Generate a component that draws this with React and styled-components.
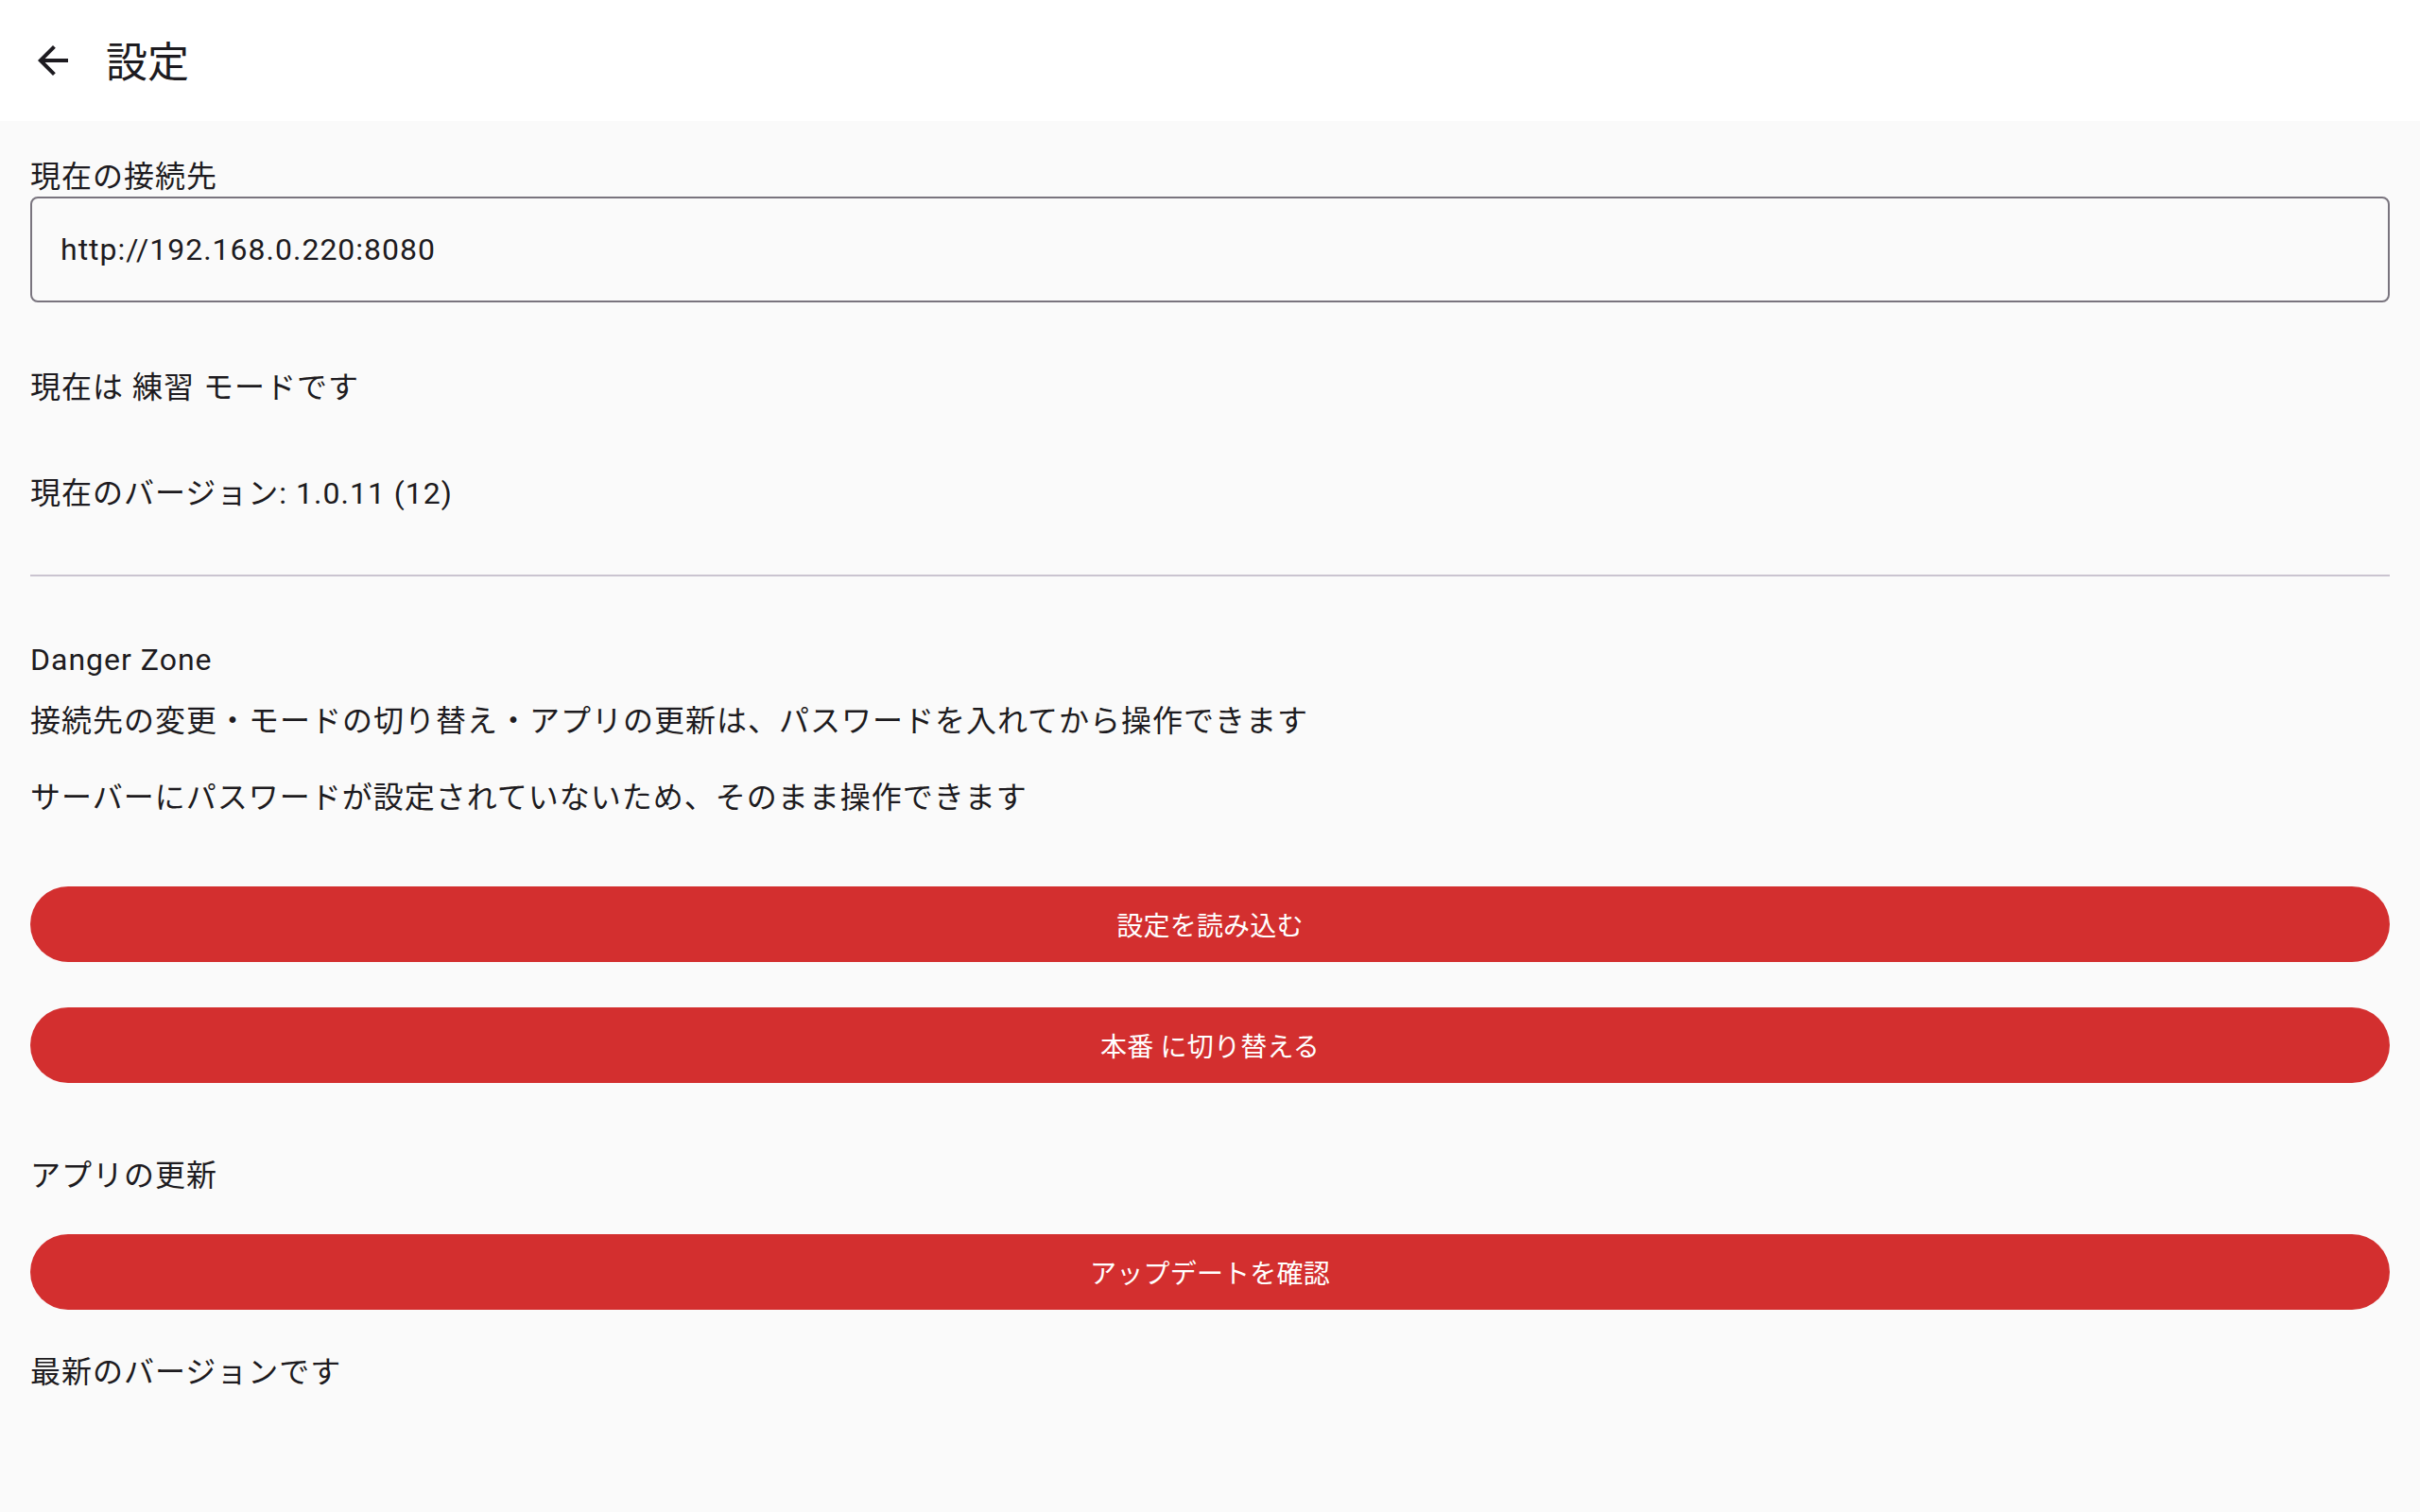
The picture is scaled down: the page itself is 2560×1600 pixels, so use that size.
import React from "react";
import styled, { createGlobalStyle } from "styled-components";

const GlobalStyle = createGlobalStyle`
  html, body {
    margin: 0;
    padding: 0;
    background: #fafafa;
  }
  body {
    font-family: Roboto, "Noto Sans CJK JP", "Noto Sans", sans-serif;
    color: #1d1b20;
    -webkit-font-smoothing: antialiased;
  }
  * { box-sizing: border-box; }
`;

const Page = styled.div`
  min-height: 100vh;
  display: flex;
  flex-direction: column;
  background: #fafafa;
`;

const AppBar = styled.header`
  height: 128px;
  background: #ffffff;
  display: flex;
  align-items: center;
  padding: 0 32px;
  gap: 32px;
`;

const IconButton = styled.button`
  width: 48px;
  height: 48px;
  padding: 0;
  border: none;
  background: transparent;
  display: flex;
  align-items: center;
  justify-content: center;
  color: #1d1b20;
  cursor: pointer;
`;

const Title = styled.h1`
  margin: 6px 0 0;
  font-size: 44px;
  line-height: 56px;
  font-weight: 400;
  color: #1d1b20;
`;

const Content = styled.main`
  display: flex;
  flex-direction: column;
  padding: 0 32px 64px;
`;

const FieldLabel = styled.label`
  margin-top: 39px;
  font-size: 32px;
  line-height: 40px;
  letter-spacing: 1px;
  color: #1d1b20;
`;

const TextField = styled.div`
  margin-top: 1px;
  height: 112px;
  border: 2px solid #79747e;
  border-radius: 8px;
  padding: 0 30px;
  display: flex;
  align-items: center;
  font-size: 32px;
  line-height: 48px;
  letter-spacing: 1px;
  color: #1d1b20;
`;

const BodyText = styled.p`
  margin: ${(p) => p.$mt}px 0 0;
  font-size: 32px;
  line-height: 48px;
  letter-spacing: 1px;
  color: #1d1b20;
`;

const Divider = styled.hr`
  margin: ${(p) => p.$mt}px 0 0;
  border: none;
  height: 2px;
  background: #cac4d0;
`;

const DangerButton = styled.button`
  margin-top: ${(p) => p.$mt}px;
  height: 80px;
  width: 100%;
  border: none;
  border-radius: 40px;
  padding: 5px 48px 0;
  background: #d32f2f;
  color: #ffffff;
  font-family: Roboto, "Noto Sans CJK JP", sans-serif;
  font-size: 28px;
  font-weight: 400;
  letter-spacing: 0.2px;
  line-height: 40px;
  display: flex;
  align-items: center;
  justify-content: center;
  cursor: pointer;
`;

const ArrowBack = () => (
  <svg width="48" height="48" viewBox="0 0 24 24" fill="currentColor" aria-hidden="true">
    <path d="M20 11H7.83l5.59-5.59L12 4l-8 8 8 8 1.41-1.41L7.83 13H20v-2z" />
  </svg>
);

export default function App() {
  return (
    <>
      <GlobalStyle />
      <Page>
        <AppBar>
          <IconButton aria-label="戻る">
            <ArrowBack />
          </IconButton>
          <Title>設定</Title>
        </AppBar>
        <Content>
          <FieldLabel>現在の接続先</FieldLabel>
          <TextField>http://192.168.0.220:8080</TextField>
          <BodyText $mt={66}>現在は 練習 モードです</BodyText>
          <BodyText $mt={64}>現在のバージョン: 1.0.11 (12)</BodyText>
          <Divider $mt={62} />
          <BodyText $mt={64}>Danger Zone</BodyText>
          <BodyText $mt={17}>
            接続先の変更・モードの切り替え・アプリの更新は、パスワードを入れてから操作できます
          </BodyText>
          <BodyText $mt={33}>
            サーバーにパスワードが設定されていないため、そのまま操作できます
          </BodyText>
          <DangerButton $mt={70}>設定を読み込む</DangerButton>
          <DangerButton $mt={48}>本番 に切り替える</DangerButton>
          <BodyText $mt={74}>アプリの更新</BodyText>
          <DangerButton $mt={38}>アップデートを確認</DangerButton>
          <BodyText $mt={42}>最新のバージョンです</BodyText>
        </Content>
      </Page>
    </>
  );
}
